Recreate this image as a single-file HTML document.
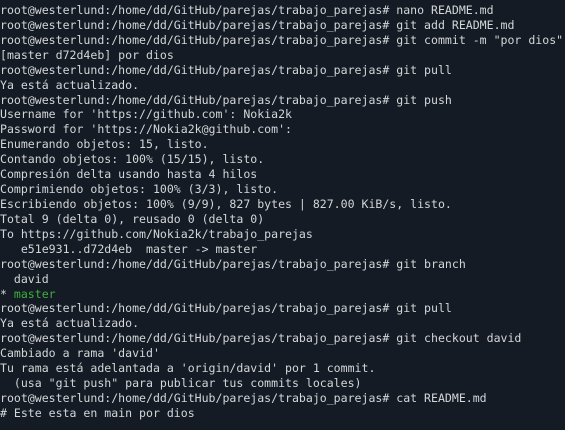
<html><head><style>
body{margin:0;background:#141b24;width:565px;height:430px;overflow:hidden}
pre{margin:0;padding:3px 0 0 0;font-family:"DejaVu Sans Mono","Liberation Mono",monospace;font-size:11.56px;line-height:14.92px;color:#d4d6d8;white-space:pre}
.g{color:#3dae3d}
</style></head><body><pre>root@westerlund:/home/dd/GitHub/parejas/trabajo_parejas# nano README.md
root@westerlund:/home/dd/GitHub/parejas/trabajo_parejas# git add README.md
root@westerlund:/home/dd/GitHub/parejas/trabajo_parejas# git commit -m "por dios"
[master d72d4eb] por dios
root@westerlund:/home/dd/GitHub/parejas/trabajo_parejas# git pull
Ya está actualizado.
root@westerlund:/home/dd/GitHub/parejas/trabajo_parejas# git push
Username for 'https://github.com': Nokia2k
Password for 'https://Nokia2k@github.com':
Enumerando objetos: 15, listo.
Contando objetos: 100% (15/15), listo.
Compresión delta usando hasta 4 hilos
Comprimiendo objetos: 100% (3/3), listo.
Escribiendo objetos: 100% (9/9), 827 bytes | 827.00 KiB/s, listo.
Total 9 (delta 0), reusado 0 (delta 0)
To https://github.com/Nokia2k/trabajo_parejas
   e51e931..d72d4eb  master -&gt; master
root@westerlund:/home/dd/GitHub/parejas/trabajo_parejas# git branch
  david
* <span class="g">master</span>
root@westerlund:/home/dd/GitHub/parejas/trabajo_parejas# git pull
Ya está actualizado.
root@westerlund:/home/dd/GitHub/parejas/trabajo_parejas# git checkout david
Cambiado a rama 'david'
Tu rama está adelantada a 'origin/david' por 1 commit.
  (usa "git push" para publicar tus commits locales)
root@westerlund:/home/dd/GitHub/parejas/trabajo_parejas# cat README.md
# Este esta en main por dios
</pre></body></html>
